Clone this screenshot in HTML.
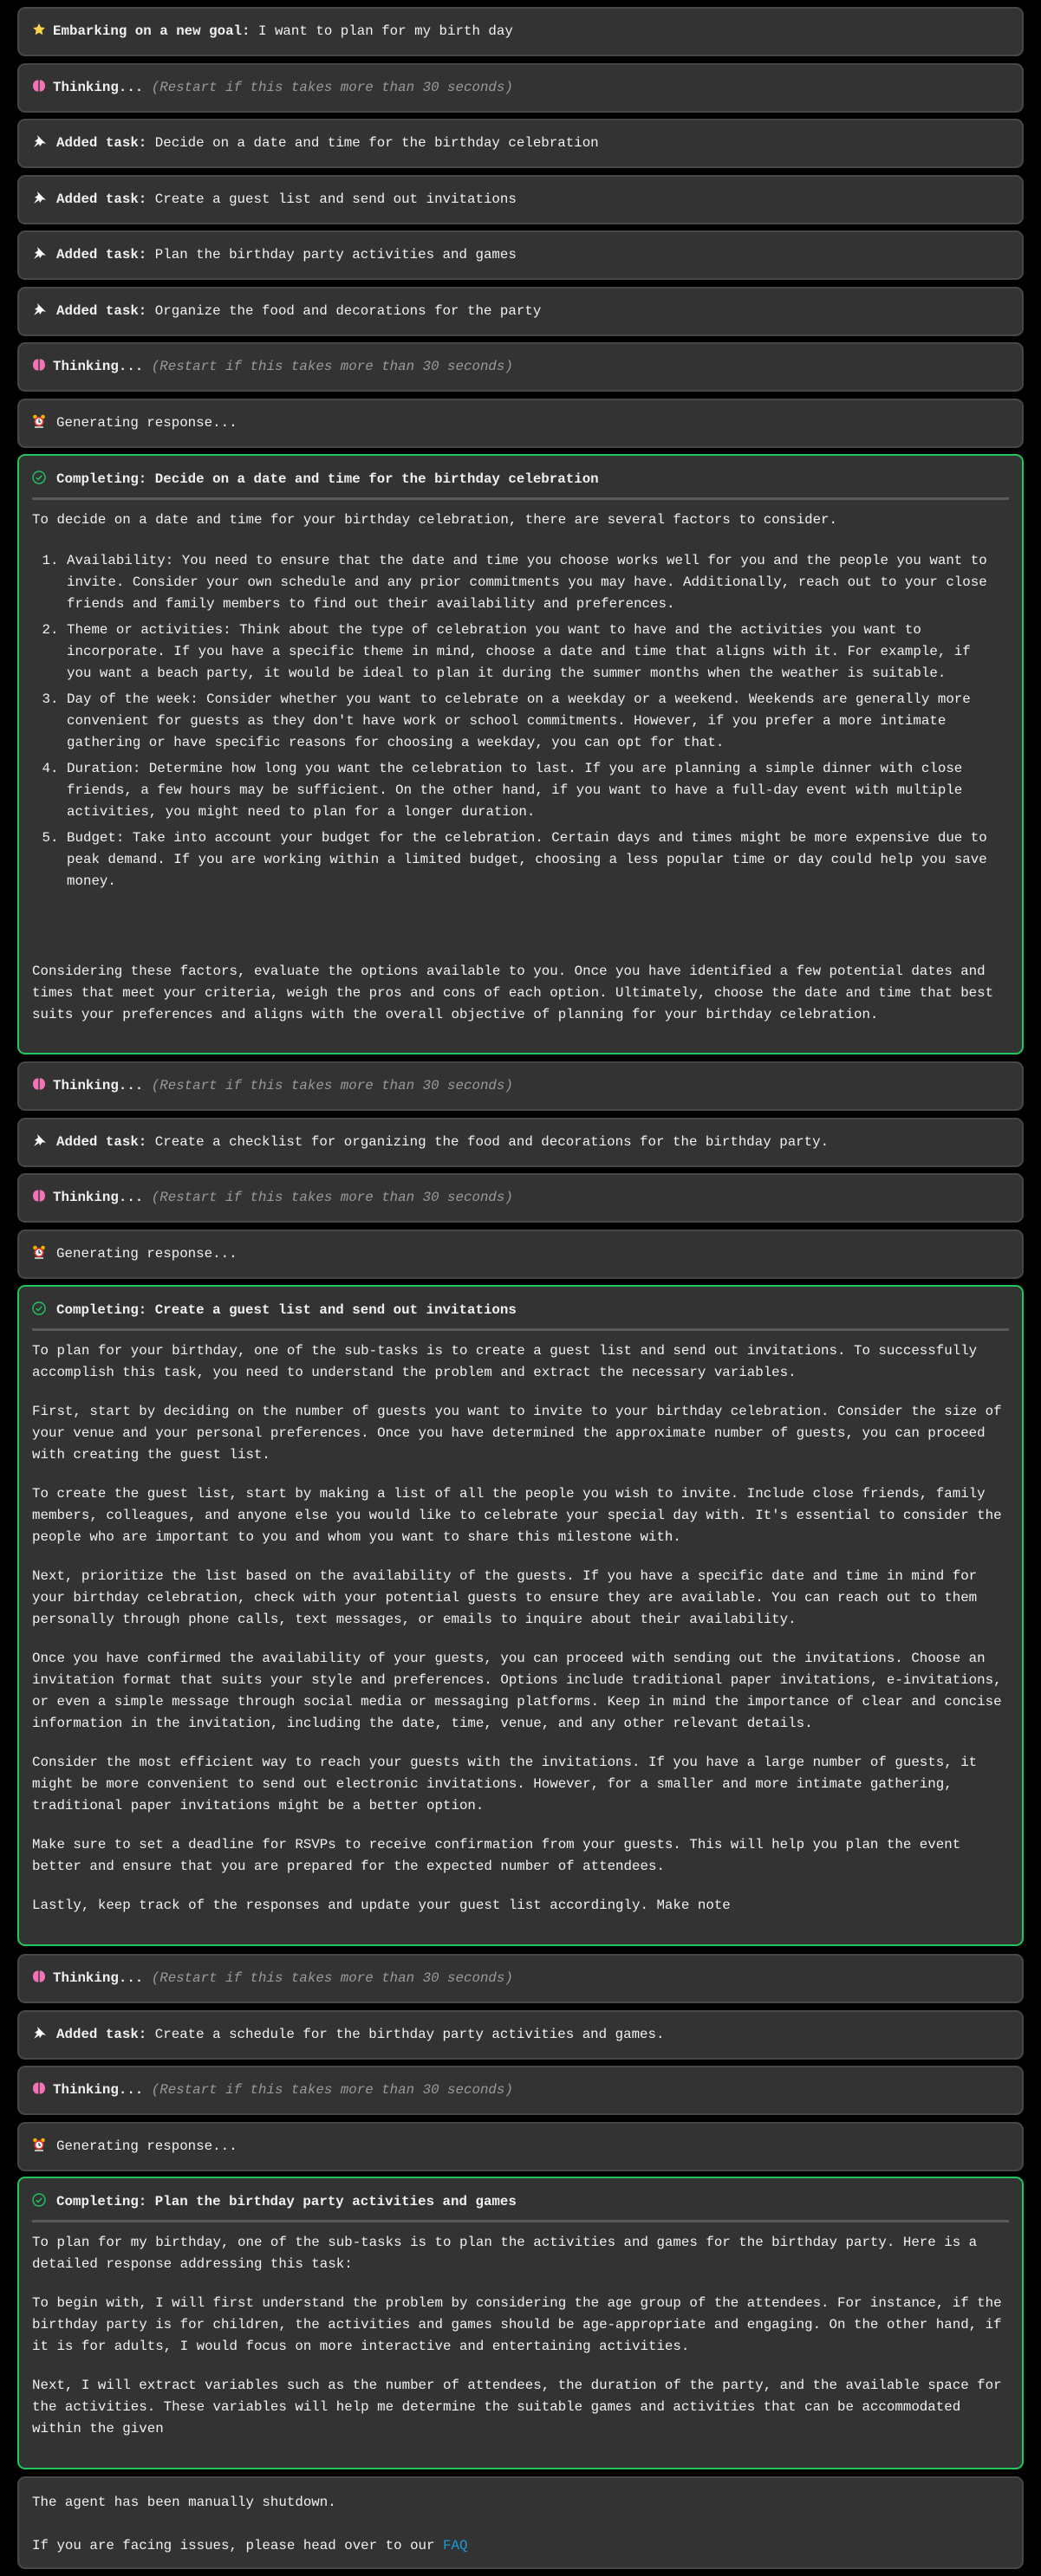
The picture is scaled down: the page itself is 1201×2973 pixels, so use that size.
<!DOCTYPE html>
<html><head><meta charset="utf-8"><style>
*{box-sizing:border-box;margin:0;padding:0}
html,body{background:#000;width:1201px;height:2973px;overflow:hidden}
body{position:relative;font-family:"Liberation Mono","DejaVu Sans Mono",monospace;font-size:15.8px;color:#f1f1f1}
.b{position:absolute;left:20px;width:1161px;background:#333;border:2px solid #474747;border-radius:9px;padding:14px 15px;line-height:25px;white-space:nowrap}
.s{height:57px}
.g{border-color:#22c55e;padding:15px 15px 33px}
.ic{display:inline-block;width:16px;height:16px;vertical-align:-2px;margin-right:12px}
b{font-weight:bold}
i{color:#9a9a9a}
hr{border:0;height:3px;background:#5a5a5a;margin:8px 0 11px}
p{margin:0 0 20px}
p:last-child{margin-bottom:0}
ol{margin:22px 0 0 0;padding-left:40px}
li{margin-bottom:5px}
a{color:#1d9bd8;text-decoration:none}
</style></head><body>

<svg width="0" height="0" style="position:absolute"><defs>
<symbol id="brain" viewBox="0 0 16 16"><path d="M7.3 1.5C3.5 1 1 4 1 8s2.5 7 6.3 6.5z M8.7 1.5C12.5 1 15 4 15 8s-2.5 7-6.3 6.5z" fill="#f472b6"/></symbol>
<symbol id="pin" viewBox="0 0 16 16"><path d="M6 1l1 4-4 3 3 1-4 6 6-4 1 3 3-4 4 1z" fill="#fff"/></symbol>
<symbol id="clock" viewBox="0 0 16 16"><circle cx="3.5" cy="3" r="2.3" fill="#f5b400"/><circle cx="12.5" cy="3" r="2.3" fill="#f5b400"/><circle cx="8" cy="8.5" r="5.5" fill="#e53935"/><circle cx="8" cy="8.5" r="3.8" fill="#fff"/><path d="M8 6v3h2" stroke="#333" stroke-width="1.2" fill="none"/><rect x="3" y="14" width="10" height="2" fill="#bbb"/></symbol>
<symbol id="chk" viewBox="0 0 16 16"><circle cx="8" cy="8" r="7" stroke="#22c55e" stroke-width="1.4" fill="none"/><path d="M4.8 8.3l2.2 2.2 4.2-4.6" stroke="#22c55e" stroke-width="1.4" fill="none"/></symbol>
<symbol id="star" viewBox="0 0 16 16"><path d="M8 1l2.1 4.4 4.8.6-3.5 3.3.9 4.8L8 11.8 3.7 14.1l.9-4.8L1.1 6l4.8-.6z" fill="#fcd34d"/></symbol>
</defs></svg>

<div class="b s" style="top:8px"><svg class="ic" style="margin-right:8px"><use href="#star"/></svg><b>Embarking on a new goal:</b> I want to plan for my birth day</div>
<div class="b s" style="top:73px"><svg class="ic" style="margin-right:8px"><use href="#brain"/></svg><b>Thinking...</b> <i>(Restart if this takes more than 30 seconds)</i></div>
<div class="b s" style="top:137px"><svg class="ic"><use href="#pin"/></svg><b>Added task:</b> Decide on a date and time for the birthday celebration</div>
<div class="b s" style="top:202px"><svg class="ic"><use href="#pin"/></svg><b>Added task:</b> Create a guest list and send out invitations</div>
<div class="b s" style="top:266px"><svg class="ic"><use href="#pin"/></svg><b>Added task:</b> Plan the birthday party activities and games</div>
<div class="b s" style="top:331px"><svg class="ic"><use href="#pin"/></svg><b>Added task:</b> Organize the food and decorations for the party</div>
<div class="b s" style="top:395px"><svg class="ic" style="margin-right:8px"><use href="#brain"/></svg><b>Thinking...</b> <i>(Restart if this takes more than 30 seconds)</i></div>
<div class="b s" style="top:460px"><svg class="ic"><use href="#clock"/></svg>Generating response...</div>

<div class="b g" style="top:524px;height:693px"><svg class="ic"><use href="#chk"/></svg><b>Completing: Decide on a date and time for the birthday celebration</b><hr>
<div>To decide on a date and time for your birthday celebration, there are several factors to consider.</div>
<ol>
<li>Availability: You need to ensure that the date and time you choose works well for you and the people you want to<br>invite. Consider your own schedule and any prior commitments you may have. Additionally, reach out to your close<br>friends and family members to find out their availability and preferences.</li>
<li>Theme or activities: Think about the type of celebration you want to have and the activities you want to<br>incorporate. If you have a specific theme in mind, choose a date and time that aligns with it. For example, if<br>you want a beach party, it would be ideal to plan it during the summer months when the weather is suitable.</li>
<li>Day of the week: Consider whether you want to celebrate on a weekday or a weekend. Weekends are generally more<br>convenient for guests as they don't have work or school commitments. However, if you prefer a more intimate<br>gathering or have specific reasons for choosing a weekday, you can opt for that.</li>
<li>Duration: Determine how long you want the celebration to last. If you are planning a simple dinner with close<br>friends, a few hours may be sufficient. On the other hand, if you want to have a full-day event with multiple<br>activities, you might need to plan for a longer duration.</li>
<li>Budget: Take into account your budget for the celebration. Certain days and times might be more expensive due to<br>peak demand. If you are working within a limited budget, choosing a less popular time or day could help you save<br>money.</li>
</ol>
<div style="margin-top:79px">Considering these factors, evaluate the options available to you. Once you have identified a few potential dates and<br>times that meet your criteria, weigh the pros and cons of each option. Ultimately, choose the date and time that best<br>suits your preferences and aligns with the overall objective of planning for your birthday celebration.</div>
</div>

<div class="b s" style="top:1225px"><svg class="ic" style="margin-right:8px"><use href="#brain"/></svg><b>Thinking...</b> <i>(Restart if this takes more than 30 seconds)</i></div>
<div class="b s" style="top:1290px"><svg class="ic"><use href="#pin"/></svg><b>Added task:</b> Create a checklist for organizing the food and decorations for the birthday party.</div>
<div class="b s" style="top:1354px"><svg class="ic" style="margin-right:8px"><use href="#brain"/></svg><b>Thinking...</b> <i>(Restart if this takes more than 30 seconds)</i></div>
<div class="b s" style="top:1419px"><svg class="ic"><use href="#clock"/></svg>Generating response...</div>

<div class="b g" style="top:1483px;height:763px"><svg class="ic"><use href="#chk"/></svg><b>Completing: Create a guest list and send out invitations</b><hr>
<p>To plan for your birthday, one of the sub-tasks is to create a guest list and send out invitations. To successfully<br>accomplish this task, you need to understand the problem and extract the necessary variables.</p>
<p>First, start by deciding on the number of guests you want to invite to your birthday celebration. Consider the size of<br>your venue and your personal preferences. Once you have determined the approximate number of guests, you can proceed<br>with creating the guest list.</p>
<p>To create the guest list, start by making a list of all the people you wish to invite. Include close friends, family<br>members, colleagues, and anyone else you would like to celebrate your special day with. It's essential to consider the<br>people who are important to you and whom you want to share this milestone with.</p>
<p>Next, prioritize the list based on the availability of the guests. If you have a specific date and time in mind for<br>your birthday celebration, check with your potential guests to ensure they are available. You can reach out to them<br>personally through phone calls, text messages, or emails to inquire about their availability.</p>
<p>Once you have confirmed the availability of your guests, you can proceed with sending out the invitations. Choose an<br>invitation format that suits your style and preferences. Options include traditional paper invitations, e-invitations,<br>or even a simple message through social media or messaging platforms. Keep in mind the importance of clear and concise<br>information in the invitation, including the date, time, venue, and any other relevant details.</p>
<p>Consider the most efficient way to reach your guests with the invitations. If you have a large number of guests, it<br>might be more convenient to send out electronic invitations. However, for a smaller and more intimate gathering,<br>traditional paper invitations might be a better option.</p>
<p>Make sure to set a deadline for RSVPs to receive confirmation from your guests. This will help you plan the event<br>better and ensure that you are prepared for the expected number of attendees.</p>
<p>Lastly, keep track of the responses and update your guest list accordingly. Make note</p>
</div>

<div class="b s" style="top:2255px"><svg class="ic" style="margin-right:8px"><use href="#brain"/></svg><b>Thinking...</b> <i>(Restart if this takes more than 30 seconds)</i></div>
<div class="b s" style="top:2320px"><svg class="ic"><use href="#pin"/></svg><b>Added task:</b> Create a schedule for the birthday party activities and games.</div>
<div class="b s" style="top:2384px"><svg class="ic" style="margin-right:8px"><use href="#brain"/></svg><b>Thinking...</b> <i>(Restart if this takes more than 30 seconds)</i></div>
<div class="b s" style="top:2449px"><svg class="ic"><use href="#clock"/></svg>Generating response...</div>

<div class="b g" style="top:2512px;height:338px"><svg class="ic"><use href="#chk"/></svg><b>Completing: Plan the birthday party activities and games</b><hr>
<p>To plan for my birthday, one of the sub-tasks is to plan the activities and games for the birthday party. Here is a<br>detailed response addressing this task:</p>
<p>To begin with, I will first understand the problem by considering the age group of the attendees. For instance, if the<br>birthday party is for children, the activities and games should be age-appropriate and engaging. On the other hand, if<br>it is for adults, I would focus on more interactive and entertaining activities.</p>
<p>Next, I will extract variables such as the number of attendees, the duration of the party, and the available space for<br>the activities. These variables will help me determine the suitable games and activities that can be accommodated<br>within the given</p>
</div>

<div class="b" style="top:2858px;height:107px;padding-top:16px">
<p style="margin-bottom:25px">The agent has been manually shutdown.</p>
<p>If you are facing issues, please head over to our <a>FAQ</a></p>
</div>

</body></html>
